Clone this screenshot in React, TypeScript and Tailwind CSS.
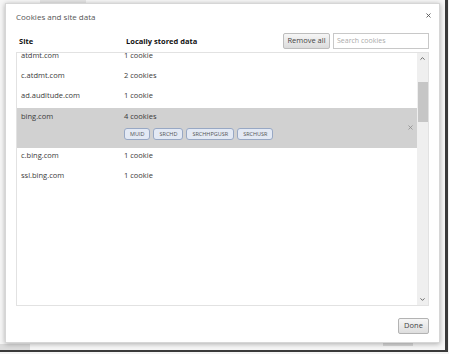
import { ChevronUp, ChevronDown, X } from "lucide-react";

const rows = [
  { site: "atdmt.com", data: "1 cookie" },
  { site: "c.atdmt.com", data: "2 cookies" },
  { site: "ad.auditude.com", data: "1 cookie" },
  { site: "bing.com", data: "4 cookies", selected: true, chips: ["MUID", "SRCHD", "SRCHHPGUSR", "SRCHUSR"] },
  { site: "c.bing.com", data: "1 cookie" },
  { site: "ssl.bing.com", data: "1 cookie" },
];

export default function App() {
  return (
    <div
      className="relative w-[449px] h-[354px] overflow-hidden bg-[#f4f4f4] text-[7.5px] text-[#3a3a3a]"
      style={{ fontFamily: '"Open Sans", "Noto Sans", sans-serif' }}
    >
      {/* window behind the dialog */}
      <div className="absolute left-0 top-0 w-[448px] h-[352px] border-r-[3px] border-b-[2px] border-[#3a3a3a] bg-[#f6f6f6]">
        <div className="absolute left-[40px] top-0 w-[46px] h-[3px] bg-[#e4e4e4]" />
        <div className="absolute left-0 bottom-0 w-[30px] h-[6px] bg-[#dcdcdc]" />
        <div className="absolute left-[383px] top-[339px] w-[30px] h-[7px] bg-[#d8d8d8]" />
      </div>

      {/* dialog */}
      <div className="absolute left-[5px] top-[3px] w-[435px] h-[340px] bg-white border border-[#d6d6d6] shadow-[0_1px_5px_rgba(0,0,0,0.3)] flex flex-col">
        <div className="flex items-start justify-between pl-[10px] pr-[7px] pt-[8px] h-[20px]">
          <span className="text-[8px] leading-[10px] text-[#555]">Cookies and site data</span>
          <X size={7} strokeWidth={3} className="text-[#555]" />
        </div>

        <div className="flex items-center pl-[13px] pr-[10px] mt-[9px] h-[16px]">
          <span className="w-[107px] font-bold text-[#111] text-[7.5px] leading-[10px]">Site</span>
          <span className="flex-1 font-bold text-[#111] text-[7.5px] leading-[10px]">Locally stored data</span>
          <button className="h-[16px] w-[47px] mr-[3px] border border-[#bdbdbd] rounded-[2px] bg-gradient-to-b from-[#f6f6f6] to-[#dcdcdc] text-[7.5px] text-[#444] leading-none">
            Remove all
          </button>
          <div className="w-[96px] h-[16px] border border-[#c8c8c8] px-[3px] text-[7px] text-[#aaa] leading-[14px]">
            Search cookies
          </div>
        </div>

        <div className="mx-[10px] mt-[3px] h-[254px] border border-[#e2e2e2] flex overflow-hidden">
          <div className="flex-1 overflow-hidden">
            <div className="-mt-[5px]">
              {rows.map((r) =>
                r.selected ? (
                  <div key={r.site} className="relative bg-[#d1d1d1] h-[40px] pt-[3px]">
                    <div className="flex pl-[4px] leading-[10px]">
                      <span className="w-[103px]">{r.site}</span>
                      <span>{r.data}</span>
                    </div>
                    <div className="flex gap-[3px] pl-[107px] mt-[7px]">
                      {r.chips!.map((c) => (
                        <span
                          key={c}
                          className="h-[12px] px-[5px] border border-[#98a8c4] rounded-[3px] bg-[#e3e9f4] text-[5.5px] text-[#555] leading-[10px]"
                        >
                          {c}
                        </span>
                      ))}
                    </div>
                    <X size={7} strokeWidth={2.5} className="absolute right-[3px] top-[16px] text-[#888]" />
                  </div>
                ) : (
                  <div key={r.site} className="flex h-[20px] pt-[2px] pl-[4px] leading-[10px]">
                    <span className="w-[103px]">{r.site}</span>
                    <span>{r.data}</span>
                  </div>
                )
              )}
            </div>
          </div>
          <div className="w-[11px] bg-[#efefef] flex flex-col items-center">
            <ChevronUp size={7} strokeWidth={3} className="mt-[2px] text-[#555]" />
            <div className="mt-[20px] w-[10px] h-[40px] bg-[#c6c6c6]" />
            <div className="flex-1" />
            <ChevronDown size={7} strokeWidth={3} className="mb-[2px] text-[#555]" />
          </div>
        </div>

        <div className="flex justify-end pr-[10px] mt-[12px]">
          <button className="h-[16px] w-[31px] border border-[#b3b3b3] rounded-[2px] bg-gradient-to-b from-[#f6f6f6] to-[#dedede] text-[7.5px] text-[#444] leading-none">
            Done
          </button>
        </div>
      </div>
    </div>
  );
}
